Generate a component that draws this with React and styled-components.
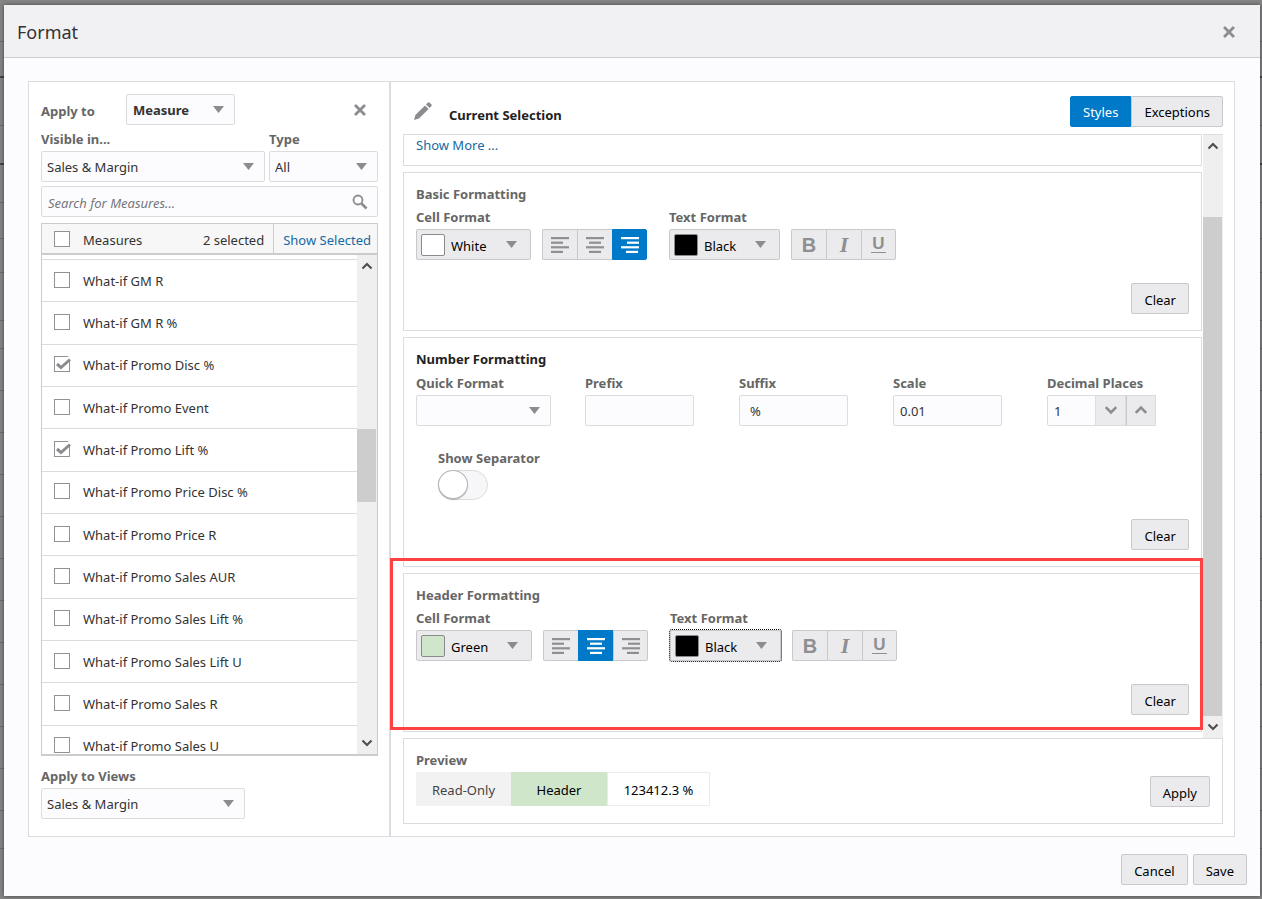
import { useId } from 'react';
import styled, { createGlobalStyle, css } from 'styled-components';

const colors = {
  accent: '#0079c8',
  link: '#1669a2',
  text: '#333',
  muted: '#666',
  icon: '#8c8c90',
  line: '#dcdcde',
  buttonBg: '#ebebed',
  buttonLine: '#c9c9cd',
  fieldBg: '#fcfcff',
};

const GlobalStyle = createGlobalStyle`
  *, *::before, *::after {
    box-sizing: border-box;
  }
  body {
    margin: 0;
    color: ${colors.text};
    font-family: 'Noto Sans', 'Open Sans', sans-serif;
    font-size: 13px;
    line-height: 24px;
  }
  button, input, select {
    margin: 0;
    font: inherit;
    color: inherit;
  }
  h1, h2, ul {
    margin: 0;
    padding: 0;
    font-size: inherit;
  }
`;

const Page = styled.div`
  position: relative;
  display: flex;
  height: 100vh;
  min-height: 860px;
  padding: 5px 2px 3px 4px;
  overflow: hidden;
  background: #858586;
`;

const PageBehind = styled.div`
  position: absolute;
  inset: 0;
  overflow: hidden;
`;

const BehindRow = styled.div`
  height: ${({ $height }) => $height}px;
  border-bottom: ${({ $thick }) => ($thick ? '2px solid #444' : '1px solid #6c6c6e')};
`;

const Dialog = styled.div`
  position: relative;
  display: flex;
  flex: 1;
  flex-direction: column;
  min-width: 0;
  background: ${colors.fieldBg};
  box-shadow: 0 0 4px rgba(0, 0, 0, 0.5);
`;

const DialogHeader = styled.header`
  display: flex;
  align-items: center;
  justify-content: space-between;
  height: 53px;
  padding: 2px 24px 0 13px;
  border-bottom: 1px solid #ccc;
  background: #f1f1f3;
`;

const DialogTitle = styled.h1`
  font-size: 18px;
  font-weight: 400;
`;

const IconButton = styled.button`
  display: flex;
  padding: 0;
  border: none;
  background: none;
  color: ${colors.icon};
  cursor: pointer;
`;

const DialogBody = styled.div`
  display: flex;
  flex: 1;
  min-height: 0;
  margin: 23px 25px 0 24px;
  border: 1px solid ${colors.line};
  background: #fff;
`;

const DialogFooter = styled.footer`
  display: flex;
  justify-content: flex-end;
  gap: 5px;
  padding: 17px 13px 11px;
`;

const Button = styled.button`
  height: 31px;
  padding: 2px 12px 0;
  border: 1px solid ${colors.buttonLine};
  border-radius: 2px;
  background: ${colors.buttonBg};
  color: #000;
  cursor: pointer;
`;

const ApplyPanel = styled.aside`
  display: flex;
  flex: none;
  flex-direction: column;
  width: 362px;
  padding: 12px 11px 17px 12px;
  border-right: 2px solid ${colors.line};
`;

const ApplyRow = styled.div`
  display: flex;
  align-items: center;
  padding-right: 11px;
  margin-bottom: 2px;

  ${IconButton} {
    margin-left: auto;
  }
`;

const Label = styled.label`
  display: block;
  color: ${colors.muted};
  font-weight: 700;
`;

const ApplyLabel = styled(Label)`
  width: 85px;
  padding-top: 3px;
`;

const FilterGrid = styled.div`
  display: grid;
  grid-template-columns: 224px 1fr;
  column-gap: 4px;
`;

const SelectBox = styled.div`
  display: grid;
  align-items: center;
  width: ${({ $width }) => ($width ? `${$width}px` : 'auto')};

  > * {
    grid-area: 1 / 1;
  }
  > svg {
    justify-self: end;
    margin-right: ${({ $arrowInset }) => $arrowInset || 11}px;
    pointer-events: none;
  }
`;

const SelectInput = styled.select`
  appearance: none;
  width: 100%;
  height: 31px;
  padding: 0 24px 0 5px;
  border: 1px solid ${colors.line};
  border-radius: 2px;
  background: ${colors.fieldBg};
  ${({ $strong }) =>
    $strong &&
    css`
      padding-left: 6px;
      font-weight: 700;
    `}
`;

const SearchBox = styled.div`
  display: flex;
  align-items: center;
  height: 31px;
  margin: 4px 0 6px;
  padding: 0 9px 0 6px;
  border: 1px solid ${colors.line};
  border-radius: 2px;
  background: ${colors.fieldBg};
  color: ${colors.icon};
`;

const SearchInput = styled.input`
  flex: 1;
  min-width: 0;
  padding: 2px 0 0;
  border: none;
  outline: none;
  background: none;

  &::placeholder {
    color: #77777a;
    font-style: italic;
  }
`;

const ListHeader = styled.div`
  display: flex;
  align-items: center;
  height: 32px;
  border: 1px solid #ccc;
  border-bottom-width: 2px;
  background: #f7f7f8;
`;

const Count = styled.span`
  margin-left: auto;
  padding: 2px 9px 0 0;
`;

const Link = styled.a`
  color: ${colors.link};
  text-decoration: none;
`;

const ShowSelected = styled(Link)`
  height: 29px;
  padding: 4px 6px 0 9px;
  border-left: 1px solid #ccc;
`;

const ListBody = styled.div`
  display: flex;
  flex: 1;
  min-height: 0;
  border: 1px solid #ccc;
  border-width: 0 1px 2px;
`;

const ListViewport = styled.div`
  flex: 1;
  overflow: hidden;
  padding-top: 4px;
`;

const MeasureList = styled.ul`
  display: grid;
  grid-auto-rows: 1fr;
  height: 508px;
  list-style: none;
`;

const MeasureItem = styled.li`
  display: flex;
  align-items: center;
  padding-bottom: 2px;
  border-top: 1px solid ${colors.line};
`;

const CheckLabel = styled.label`
  display: flex;
  align-items: center;
  gap: 13px;
  padding-left: 12px;

  span:last-child {
    padding-top: 2px;
  }
`;

const CheckHolder = styled.span`
  display: grid;

  > * {
    grid-area: 1 / 1;
  }
  svg {
    visibility: hidden;
    pointer-events: none;
  }
  input:checked + svg {
    visibility: visible;
  }
`;

const CheckInput = styled.input`
  appearance: none;
  width: 16px;
  height: 16px;
  border: 1px solid #929296;
  background: #fff;
`;

const Scrollbar = styled.div`
  display: flex;
  flex: none;
  flex-direction: column;
  width: 20px;
  background: #efeff0;
`;

const ScrollArrow = styled.span`
  display: flex;
  align-items: center;
  justify-content: center;
  height: 22px;
  color: #505054;
`;

const ScrollTrack = styled.div`
  flex: ${({ $grow }) => $grow} 0 0;
`;

const ScrollThumb = styled.div`
  flex: ${({ $grow }) => $grow} 0 0;
  width: 19px;
  background: #cdcdcd;
`;

const ViewsLabel = styled(Label)`
  margin-top: 8px;
`;

const StylePanel = styled.main`
  display: flex;
  flex: 1;
  flex-direction: column;
  min-width: 0;
  padding: 0 11px 12px 12px;
`;

const StyleHeader = styled.div`
  display: flex;
  align-items: center;
  height: 52px;
  padding: 6px 0 0 11px;
  color: ${colors.icon};
`;

const StyleTitle = styled.h2`
  padding: 8px 0 0 17px;
  color: #222;
`;

const Tabs = styled.div`
  display: flex;
  margin-left: auto;
`;

const Tab = styled(Button)`
  border-radius: 0 2px 2px 0;
  ${({ $active }) =>
    $active &&
    css`
      border-color: ${colors.accent};
      border-radius: 2px 0 0 2px;
      background: ${colors.accent};
      color: #fff;
    `}
`;

const ScrollArea = styled.div`
  display: flex;
  flex: 1;
  min-height: 0;
  margin-left: -13px;
  padding-left: 13px;
  overflow: hidden;

  ${Scrollbar} {
    border-top: 1px solid ${colors.line};
  }
`;

const Sections = styled.div`
  display: flex;
  flex: 1;
  flex-direction: column;
  gap: 6px;
  min-width: 0;
  margin-right: 1px;
`;

const Section = styled.section`
  position: relative;
  display: flex;
  flex-direction: column;
  padding: 9px 12px 16px;
  border: 1px solid ${colors.line};

  > ${Button} {
    align-self: flex-end;
  }
`;

const MoreSection = styled(Section)`
  height: 32px;
  padding-top: 0;
  line-height: 20px;
`;

const SectionTitle = styled.h2`
  color: ${({ $dark }) => ($dark ? '#222' : colors.muted)};
`;

const Highlight = styled.div`
  position: absolute;
  top: -16px;
  right: -2px;
  bottom: 1px;
  left: -14px;
  border: 3px solid #ff4142;
  pointer-events: none;
`;

const FormatRow = styled.div`
  display: flex;
  gap: 22px;
  margin-bottom: 23px;

  ${Label} {
    line-height: 23px;
  }
`;

const Controls = styled.div`
  display: flex;
  gap: 11px;
`;

const ColorBox = styled.div`
  display: grid;
  grid-template-columns: 34px 1fr;
  align-items: center;
  width: ${({ $width }) => $width}px;
  height: 31px;
  border: 1px solid ${colors.buttonLine};
  border-radius: 2px;
  background: ${colors.buttonBg};
  outline: ${({ $focused }) => ($focused ? '1px dotted #000' : 'none')};

  ${SelectInput} {
    height: 29px;
    padding: 2px 20px 0 0;
    border: none;
    background: none;
    color: #000;
  }
`;

const Swatch = styled.span`
  width: 24px;
  height: 22px;
  margin-left: 4px;
  border: 1px solid #8a8a8c;
  border-radius: 2px;
  background: ${({ $color }) => $color};
`;

const Segments = styled.div`
  display: flex;
  height: 31px;
`;

const Segment = styled.button`
  display: flex;
  align-items: center;
  justify-content: center;
  width: 35px;
  padding: 0;
  border: 1px solid ${colors.buttonLine};
  border-right-width: 0;
  background: ${colors.buttonBg};
  color: #8f8f92;
  cursor: pointer;

  &:first-child {
    border-radius: 2px 0 0 2px;
  }
  &:last-child {
    border-right-width: 1px;
    border-radius: 0 2px 2px 0;
  }
  &[aria-pressed='true'] {
    border-color: ${colors.accent};
    background: ${colors.accent};
    color: #fff;
  }
`;

const Letter = styled.span`
  padding: 0 1px;
  font-family: ${({ $serif }) => ($serif ? "'Liberation Serif', serif" : "'Liberation Sans', sans-serif")};
  font-size: ${({ $size }) => $size}px;
  font-style: ${({ $serif }) => ($serif ? 'italic' : 'normal')};
  font-weight: 700;
  line-height: 16px;
  border-bottom: ${({ $underlined }) => ($underlined ? '1px solid' : 'none')};
`;

const NumberGrid = styled.div`
  display: grid;
  grid-template-columns: 169px repeat(3, 154px) 1fr;
  margin-bottom: 20px;
`;

const TextInput = styled.input`
  width: 109px;
  height: 31px;
  padding: 1px 6px 0 ${({ $indent }) => $indent || 6}px;
  border: 1px solid ${colors.line};
  border-radius: 2px;
  background: ${colors.fieldBg};
`;

const Stepper = styled.div`
  display: flex;

  ${TextInput} {
    width: 49px;
    border-radius: 2px 0 0 2px;
  }
`;

const StepButton = styled.button`
  display: flex;
  align-items: center;
  justify-content: center;
  width: 30px;
  padding: 0 0 2px;
  border: 1px solid ${colors.line};
  border-left: ${({ $first }) => ($first ? 'none' : `1px solid ${colors.buttonLine}`)};
  background: ${colors.buttonBg};
  color: ${colors.icon};
`;

const SeparatorField = styled.div`
  margin: 0 0 19px 22px;
`;

const Switch = styled.input`
  display: block;
  appearance: none;
  width: 50px;
  height: 30px;
  border: 1px solid ${colors.line};
  border-radius: 15px;
  background: #f7f7f9;

  &::before {
    content: '';
    display: block;
    width: 30px;
    height: 29px;
    margin: -1px 0 0 -1px;
    border: 1px solid #b4b4b8;
    border-radius: 50%;
    background: #fff;
    box-shadow: 0 1px 1px rgba(0, 0, 0, 0.2);
  }
`;

const Preview = styled.section`
  display: flex;
  align-items: flex-end;
  justify-content: space-between;
  height: 86px;
  padding: 0 12px 16px;
  border: 1px solid ${colors.line};
`;

const PreviewCells = styled.div`
  display: flex;
  height: 34px;
  margin-bottom: 1px;
  line-height: 34px;
  text-align: center;
`;

const PreviewCell = styled.span`
  width: ${({ $width }) => $width}px;
  border: 1px solid ${({ $bg }) => $bg || '#ebebed'};
  background: ${({ $bg }) => $bg || '#fff'};
  color: ${({ $bg }) => ($bg === '#f2f2f3' ? '#444' : '#000')};
`;

const Icon = ({ width, height = width, children }) => (
  <svg width={width} height={height} viewBox={`0 0 ${width} ${height}`} fill="none" aria-hidden="true">
    {children}
  </svg>
);

const CloseIcon = () => (
  <Icon width={14}>
    <path d="M2 2l10 10M12 2L2 12" stroke="currentColor" strokeWidth="2.8" />
  </Icon>
);

const ArrowIcon = () => (
  <Icon width={11} height={7}>
    <path d="M0 0h11L5.5 7z" fill={colors.icon} />
  </Icon>
);

const Chevron = ({ up, width = 12 }) => (
  <svg width={width} height={width} viewBox="0 0 12 12" fill="none" aria-hidden="true">
    <path d={up ? 'M1.5 8.5L6 4l4.5 4.5' : 'M1.5 3.5L6 8l4.5-4.5'} stroke="currentColor" strokeWidth="2.2" />
  </svg>
);

const SearchIcon = () => (
  <Icon width={16}>
    <circle cx="6" cy="6" r="4.5" stroke="currentColor" strokeWidth="1.8" />
    <path d="M9.5 9.5l5 5" stroke="currentColor" strokeWidth="2.6" />
  </Icon>
);

const PencilIcon = () => (
  <Icon width={18}>
    <path d="M0 18l1.4-5L11 3.4 14.6 7 5 16.6z" fill="currentColor" />
    <path d="M12 2.4L13.7.7q1-.9 2 0l1.600 1.600q.9 1 0 2L15.600 6z" fill="currentColor" />
  </Icon>
);

const CheckIcon = () => (
  <svg width="16" height="16" viewBox="0 0 16 16" fill="none" aria-hidden="true" overflow="visible">
    <path d="M12 5L16.5 1" stroke="#fff" strokeWidth="4" />
    <path d="M3 8l4 3.5L16 3.5" stroke={colors.icon} strokeWidth="3" />
  </svg>
);

const alignBars = {
  left: [0, 0, 0, 0],
  center: [0, 3, 0, 3],
  right: [0, 6, 0, 5],
};

const AlignIcon = ({ align }) => (
  <Icon width={18} height={16}>
    {alignBars[align].map((x, i) => (
      <rect key={i} x={x} y={i * 4.6} width={i % 2 ? 12 : 18} height="2.2" fill="currentColor" />
    ))}
  </Icon>
);

function Select({ id, value, width, arrowInset, strong, label }) {
  return (
    <SelectBox $width={width} $arrowInset={arrowInset}>
      <SelectInput id={id} defaultValue={value} aria-label={label} $strong={strong}>
        <option>{value}</option>
      </SelectInput>
      <ArrowIcon />
    </SelectBox>
  );
}

function Checkbox({ label, checked }) {
  return (
    <CheckLabel>
      <CheckHolder>
        <CheckInput type="checkbox" defaultChecked={checked} />
        <CheckIcon />
      </CheckHolder>
      <span>{label}</span>
    </CheckLabel>
  );
}

function ScrollRail({ before, thumb, after }) {
  return (
    <Scrollbar aria-hidden="true">
      <ScrollArrow>
        <Chevron up />
      </ScrollArrow>
      <ScrollTrack $grow={before} />
      <ScrollThumb $grow={thumb} />
      <ScrollTrack $grow={after} />
      <ScrollArrow>
        <Chevron />
      </ScrollArrow>
    </Scrollbar>
  );
}

function ColorSelect({ id, name, color, width, focused }) {
  return (
    <ColorBox $width={width} $focused={focused}>
      <Swatch $color={color} />
      <Select id={id} value={name} arrowInset={13} />
    </ColorBox>
  );
}

function FormatControls({ cell, cellColor, cellWidth, align, focused }) {
  const id = useId();

  return (
    <FormatRow>
      <div>
        <Label htmlFor={`${id}-cell`}>Cell Format</Label>
        <Controls>
          <ColorSelect id={`${id}-cell`} name={cell} color={cellColor} width={cellWidth} />
          <Segments>
            {Object.keys(alignBars).map((side) => (
              <Segment key={side} type="button" aria-label={`Align ${side}`} aria-pressed={side === align}>
                <AlignIcon align={side} />
              </Segment>
            ))}
          </Segments>
        </Controls>
      </div>
      <div>
        <Label htmlFor={`${id}-text`}>Text Format</Label>
        <Controls>
          <ColorSelect id={`${id}-text`} name="Black" color="#000" width={111} focused={focused} />
          <Segments>
            <Segment type="button" aria-label="Bold">
              <Letter $size={20}>B</Letter>
            </Segment>
            <Segment type="button" aria-label="Italic">
              <Letter $size={22} $serif>I</Letter>
            </Segment>
            <Segment type="button" aria-label="Underline">
              <Letter $size={17} $underlined>U</Letter>
            </Segment>
          </Segments>
        </Controls>
      </div>
    </FormatRow>
  );
}

const measures = [
  { name: 'What-if GM R' },
  { name: 'What-if GM R %' },
  { name: 'What-if Promo Disc %', checked: true },
  { name: 'What-if Promo Event' },
  { name: 'What-if Promo Lift %', checked: true },
  { name: 'What-if Promo Price Disc %' },
  { name: 'What-if Promo Price R' },
  { name: 'What-if Promo Sales AUR' },
  { name: 'What-if Promo Sales Lift %' },
  { name: 'What-if Promo Sales Lift U' },
  { name: 'What-if Promo Sales R' },
  { name: 'What-if Promo Sales U' },
];

const behindRows = [42, 36, 48, 39, 38, 36, 34, 48, 28, 42, 42, 42, 42, 42, 42, 42, 42, 42, 42, 42, 38];

function App() {
  return (
    <>
      <GlobalStyle />
      <Page>
        <PageBehind aria-hidden="true">
          {behindRows.map((height, i) => (
            <BehindRow key={i} $height={height} $thick={i === 1 || i === 3} />
          ))}
        </PageBehind>
        <Dialog role="dialog" aria-labelledby="format-title">
          <DialogHeader>
            <DialogTitle id="format-title">Format</DialogTitle>
            <IconButton type="button" aria-label="Close">
              <CloseIcon />
            </IconButton>
          </DialogHeader>

          <DialogBody>
            <ApplyPanel>
              <ApplyRow>
                <ApplyLabel htmlFor="apply-to">Apply to</ApplyLabel>
                <Select id="apply-to" value="Measure" width={109} strong />
                <IconButton type="button" aria-label="Close panel">
                  <CloseIcon />
                </IconButton>
              </ApplyRow>
              <FilterGrid>
                <Label htmlFor="visible-in">Visible in...</Label>
                <Label htmlFor="type">Type</Label>
                <Select id="visible-in" value="Sales & Margin" />
                <Select id="type" value="All" />
              </FilterGrid>
              <SearchBox>
                <SearchInput type="text" placeholder="Search for Measures..." aria-label="Search for Measures" />
                <SearchIcon />
              </SearchBox>
              <ListHeader>
                <Checkbox label="Measures" />
                <Count>2 selected</Count>
                <ShowSelected href="#selected">Show Selected</ShowSelected>
              </ListHeader>
              <ListBody>
                <ListViewport>
                  <MeasureList>
                    {measures.map(({ name, checked }) => (
                      <MeasureItem key={name}>
                        <Checkbox label={name} checked={checked} />
                      </MeasureItem>
                    ))}
                  </MeasureList>
                </ListViewport>
                <ScrollRail before={152} thumb={73} after={230} />
              </ListBody>
              <ViewsLabel htmlFor="views">Apply to Views</ViewsLabel>
              <Select id="views" value="Sales & Margin" width={204} />
            </ApplyPanel>

            <StylePanel>
              <StyleHeader>
                <PencilIcon />
                <StyleTitle>Current Selection</StyleTitle>
                <Tabs>
                  <Tab type="button" $active>Styles</Tab>
                  <Tab type="button">Exceptions</Tab>
                </Tabs>
              </StyleHeader>

              <ScrollArea>
                <Sections>
                  <MoreSection>
                    <div>
                      <Link href="#more">Show More ...</Link>
                    </div>
                  </MoreSection>

                  <Section>
                    <SectionTitle>Basic Formatting</SectionTitle>
                    <FormatControls cell="White" cellColor="#fff" cellWidth={115} align="right" />
                    <Button type="button">Clear</Button>
                  </Section>

                  <Section>
                    <SectionTitle $dark>Number Formatting</SectionTitle>
                    <NumberGrid>
                      <div>
                        <Label htmlFor="quick">Quick Format</Label>
                        <Select id="quick" value="" width={135} />
                      </div>
                      <div>
                        <Label htmlFor="prefix">Prefix</Label>
                        <TextInput id="prefix" type="text" />
                      </div>
                      <div>
                        <Label htmlFor="suffix">Suffix</Label>
                        <TextInput id="suffix" type="text" defaultValue="%" $indent={10} />
                      </div>
                      <div>
                        <Label htmlFor="scale">Scale</Label>
                        <TextInput id="scale" type="text" defaultValue="0.01" />
                      </div>
                      <div>
                        <Label htmlFor="decimals">Decimal Places</Label>
                        <Stepper>
                          <TextInput id="decimals" type="text" defaultValue="1" />
                          <StepButton type="button" aria-label="Decrease" $first>
                            <Chevron width={14} />
                          </StepButton>
                          <StepButton type="button" aria-label="Increase">
                            <Chevron width={14} up />
                          </StepButton>
                        </Stepper>
                      </div>
                    </NumberGrid>
                    <SeparatorField>
                      <Label htmlFor="separator">Show Separator</Label>
                      <Switch id="separator" type="checkbox" role="switch" />
                    </SeparatorField>
                    <Button type="button">Clear</Button>
                  </Section>

                  <Section>
                    <SectionTitle>Header Formatting</SectionTitle>
                    <FormatControls cell="Green" cellColor="#cfe6ca" cellWidth={116} align="center" focused />
                    <Button type="button">Clear</Button>
                    <Highlight />
                  </Section>
                </Sections>
                <ScrollRail before={60} thumb={501} after={0} />
              </ScrollArea>

              <Preview>
                <div>
                  <SectionTitle>Preview</SectionTitle>
                  <PreviewCells>
                    <PreviewCell $width={95} $bg="#f2f2f3">Read-Only</PreviewCell>
                    <PreviewCell $width={96} $bg="#cfe6ca">Header</PreviewCell>
                    <PreviewCell $width={103}>123412.3 %</PreviewCell>
                  </PreviewCells>
                </div>
                <Button type="button">Apply</Button>
              </Preview>
            </StylePanel>
          </DialogBody>

          <DialogFooter>
            <Button type="button">Cancel</Button>
            <Button type="button">Save</Button>
          </DialogFooter>
        </Dialog>
      </Page>
    </>
  );
}

export default App;
